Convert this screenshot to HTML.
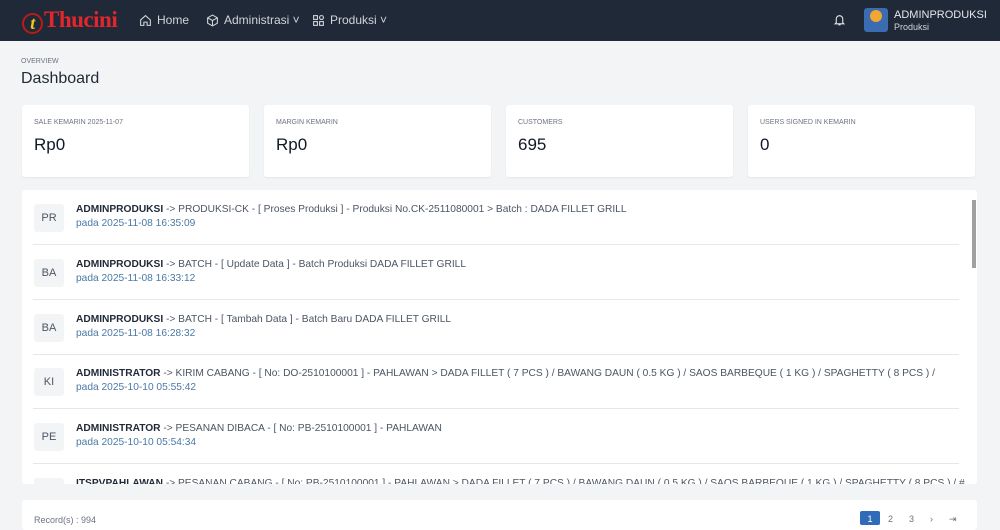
<!DOCTYPE html>
<html><head><meta charset="utf-8"><style>
*{box-sizing:border-box;margin:0;padding:0}
body{width:1000px;height:522px;overflow:hidden;background:#f3f4f6;font-family:"Liberation Sans",sans-serif;color:#1f2937;position:relative}
.nav{position:absolute;left:0;top:0;width:1000px;height:41px;background:#1f2937}
.logo{position:absolute;left:22px;top:7px;font-family:"Liberation Serif",serif;font-weight:bold;font-size:23px;color:#e3262b;letter-spacing:-0.5px}
.logo .t{display:inline-block;width:21px;height:21px;border-radius:50%;border:2px solid #b71c1c;color:#f3c623;font-style:italic;font-size:18px;text-align:center;line-height:17px;margin-right:1px;vertical-align:-2px}
.ni{position:absolute;top:13px;color:#d1d5db;font-size:12px}
.ni svg{vertical-align:-3px;margin-right:5px}
.user{position:absolute;left:864px;top:8px;width:24px;height:24px;border-radius:3px;background:#3b6bb0;overflow:hidden}
.user:before{content:"";position:absolute;left:6px;top:2px;width:12px;height:12px;border-radius:50%;background:#f0a830}
.un{position:absolute;left:894px;top:9px;color:#e5e7eb;font-size:11px;line-height:12px}
.un small{font-size:9px;color:#d1d5db}
.ov{position:absolute;left:21px;top:58px;font-size:7px;color:#6b7280}
.h1{position:absolute;left:21px;top:70px;font-size:16px;color:#1f2937}
.card{position:absolute;top:105px;height:72px;width:227px;background:#fff;border-radius:3px;box-shadow:0 1px 2px rgba(0,0,0,.06)}
.card .l{position:absolute;left:12px;top:14px;font-size:7px;color:#6b7280}
.card .v{position:absolute;left:12px;top:30px;font-size:17px;color:#111827}
.panel{position:absolute;left:22px;top:190px;width:955px;height:294px;background:#fff;border-radius:3px;overflow:hidden}
.row{position:absolute;left:11px;width:926px;height:55px;border-bottom:1px solid #e5e7eb}
.av{position:absolute;left:1px;top:14px;width:30px;height:28px;background:#f3f4f6;border-radius:3px;font-size:11px;color:#4b5563;text-align:center;line-height:28px}
.tx{position:absolute;left:43px;top:14px;font-size:10.2px;color:#4b5563;white-space:nowrap}
.tx b{color:#1f2937}
.tx .d{display:block;color:#4a78a6;margin-top:3px}
.sb{position:absolute;left:972px;top:200px;width:4px;height:68px;background:#a0a0a0}
.foot{position:absolute;left:22px;top:500px;width:955px;height:30px;background:#fff;border-radius:3px}
.rec{position:absolute;left:12px;top:15px;font-size:9px;color:#6b7280}
.pg{position:absolute;left:838px;top:11px;width:20px;height:14px;background:#2f6bb8;border-radius:2px;color:#fff;font-size:9px;text-align:center;line-height:16px}
.pp{position:absolute;top:14px;font-size:9px;color:#6b7280}
</style></head><body>
<div class="nav">
<div class="logo"><span class="t">t</span>Thucini</div>
<div class="ni" style="left:139px"><svg width="13" height="13" viewBox="0 0 24 24" fill="none" stroke="#d1d5db" stroke-width="2"><path d="M3 11l9-8 9 8v10h-6v-6h-6v6H3z"/></svg>Home</div>
<div class="ni" style="left:206px"><svg width="13" height="13" viewBox="0 0 24 24" fill="none" stroke="#d1d5db" stroke-width="2"><path d="M12 2l9 5v10l-9 5-9-5V7z M3 7l9 5 9-5 M12 12v10"/></svg>Administrasi ˅</div>
<div class="ni" style="left:312px"><svg width="13" height="13" viewBox="0 0 24 24" fill="none" stroke="#d1d5db" stroke-width="2"><rect x="3" y="3" width="7" height="7"/><rect x="14" y="3" width="7" height="7" rx="3"/><rect x="3" y="14" width="7" height="7"/><rect x="14" y="14" width="7" height="7"/></svg>Produksi ˅</div>
<svg style="position:absolute;left:833px;top:13px" width="13" height="14" viewBox="0 0 24 24" fill="none" stroke="#e5e7eb" stroke-width="2"><path d="M6 17V10a6 6 0 0112 0v7l2 2H4z M10 21h4"/></svg>
<div class="user"></div>
<div class="un">ADMINPRODUKSI<br><small>Produksi</small></div>
</div>
<div class="ov">OVERVIEW</div>
<div class="h1">Dashboard</div>
<div class="card" style="left:22px"><div class="l">SALE KEMARIN 2025-11-07</div><div class="v">Rp0</div></div>
<div class="card" style="left:264px"><div class="l">MARGIN KEMARIN</div><div class="v">Rp0</div></div>
<div class="card" style="left:506px"><div class="l">CUSTOMERS</div><div class="v">695</div></div>
<div class="card" style="left:748px"><div class="l">USERS SIGNED IN KEMARIN</div><div class="v">0</div></div>
<div class="panel">
<div class="row" style="top:0"><div class="av">PR</div><div class="tx"><b>ADMINPRODUKSI</b> -&gt; PRODUKSI-CK - [ Proses Produksi ] - Produksi No.CK-2511080001 &gt; Batch : DADA FILLET GRILL<span class="d">pada 2025-11-08 16:35:09</span></div></div>
<div class="row" style="top:55px"><div class="av">BA</div><div class="tx"><b>ADMINPRODUKSI</b> -&gt; BATCH - [ Update Data ] - Batch Produksi DADA FILLET GRILL<span class="d">pada 2025-11-08 16:33:12</span></div></div>
<div class="row" style="top:110px"><div class="av">BA</div><div class="tx"><b>ADMINPRODUKSI</b> -&gt; BATCH - [ Tambah Data ] - Batch Baru DADA FILLET GRILL<span class="d">pada 2025-11-08 16:28:32</span></div></div>
<div class="row" style="top:164px"><div class="av">KI</div><div class="tx"><b>ADMINISTRATOR</b> -&gt; KIRIM CABANG - [ No: DO-2510100001 ] - PAHLAWAN &gt; DADA FILLET ( 7 PCS ) / BAWANG DAUN ( 0.5 KG ) / SAOS BARBEQUE ( 1 KG ) / SPAGHETTY ( 8 PCS ) /<span class="d">pada 2025-10-10 05:55:42</span></div></div>
<div class="row" style="top:219px"><div class="av">PE</div><div class="tx"><b>ADMINISTRATOR</b> -&gt; PESANAN DIBACA - [ No: PB-2510100001 ] - PAHLAWAN<span class="d">pada 2025-10-10 05:54:34</span></div></div>
<div class="row" style="top:274px"><div class="av">IT</div><div class="tx"><b>ITSPVPAHLAWAN</b> -&gt; PESANAN CABANG - [ No: PB-2510100001 ] - PAHLAWAN &gt; DADA FILLET ( 7 PCS ) / BAWANG DAUN ( 0.5 KG ) / SAOS BARBEQUE ( 1 KG ) / SPAGHETTY ( 8 PCS ) / #</div></div>
</div>
<div class="sb"></div>
<div class="foot"><div class="rec">Record(s) : 994</div><div class="pg">1</div><div class="pp" style="left:866px">2</div><div class="pp" style="left:887px">3</div><div class="pp" style="left:908px">›</div><div class="pp" style="left:927px">⇥</div></div>
</body></html>
